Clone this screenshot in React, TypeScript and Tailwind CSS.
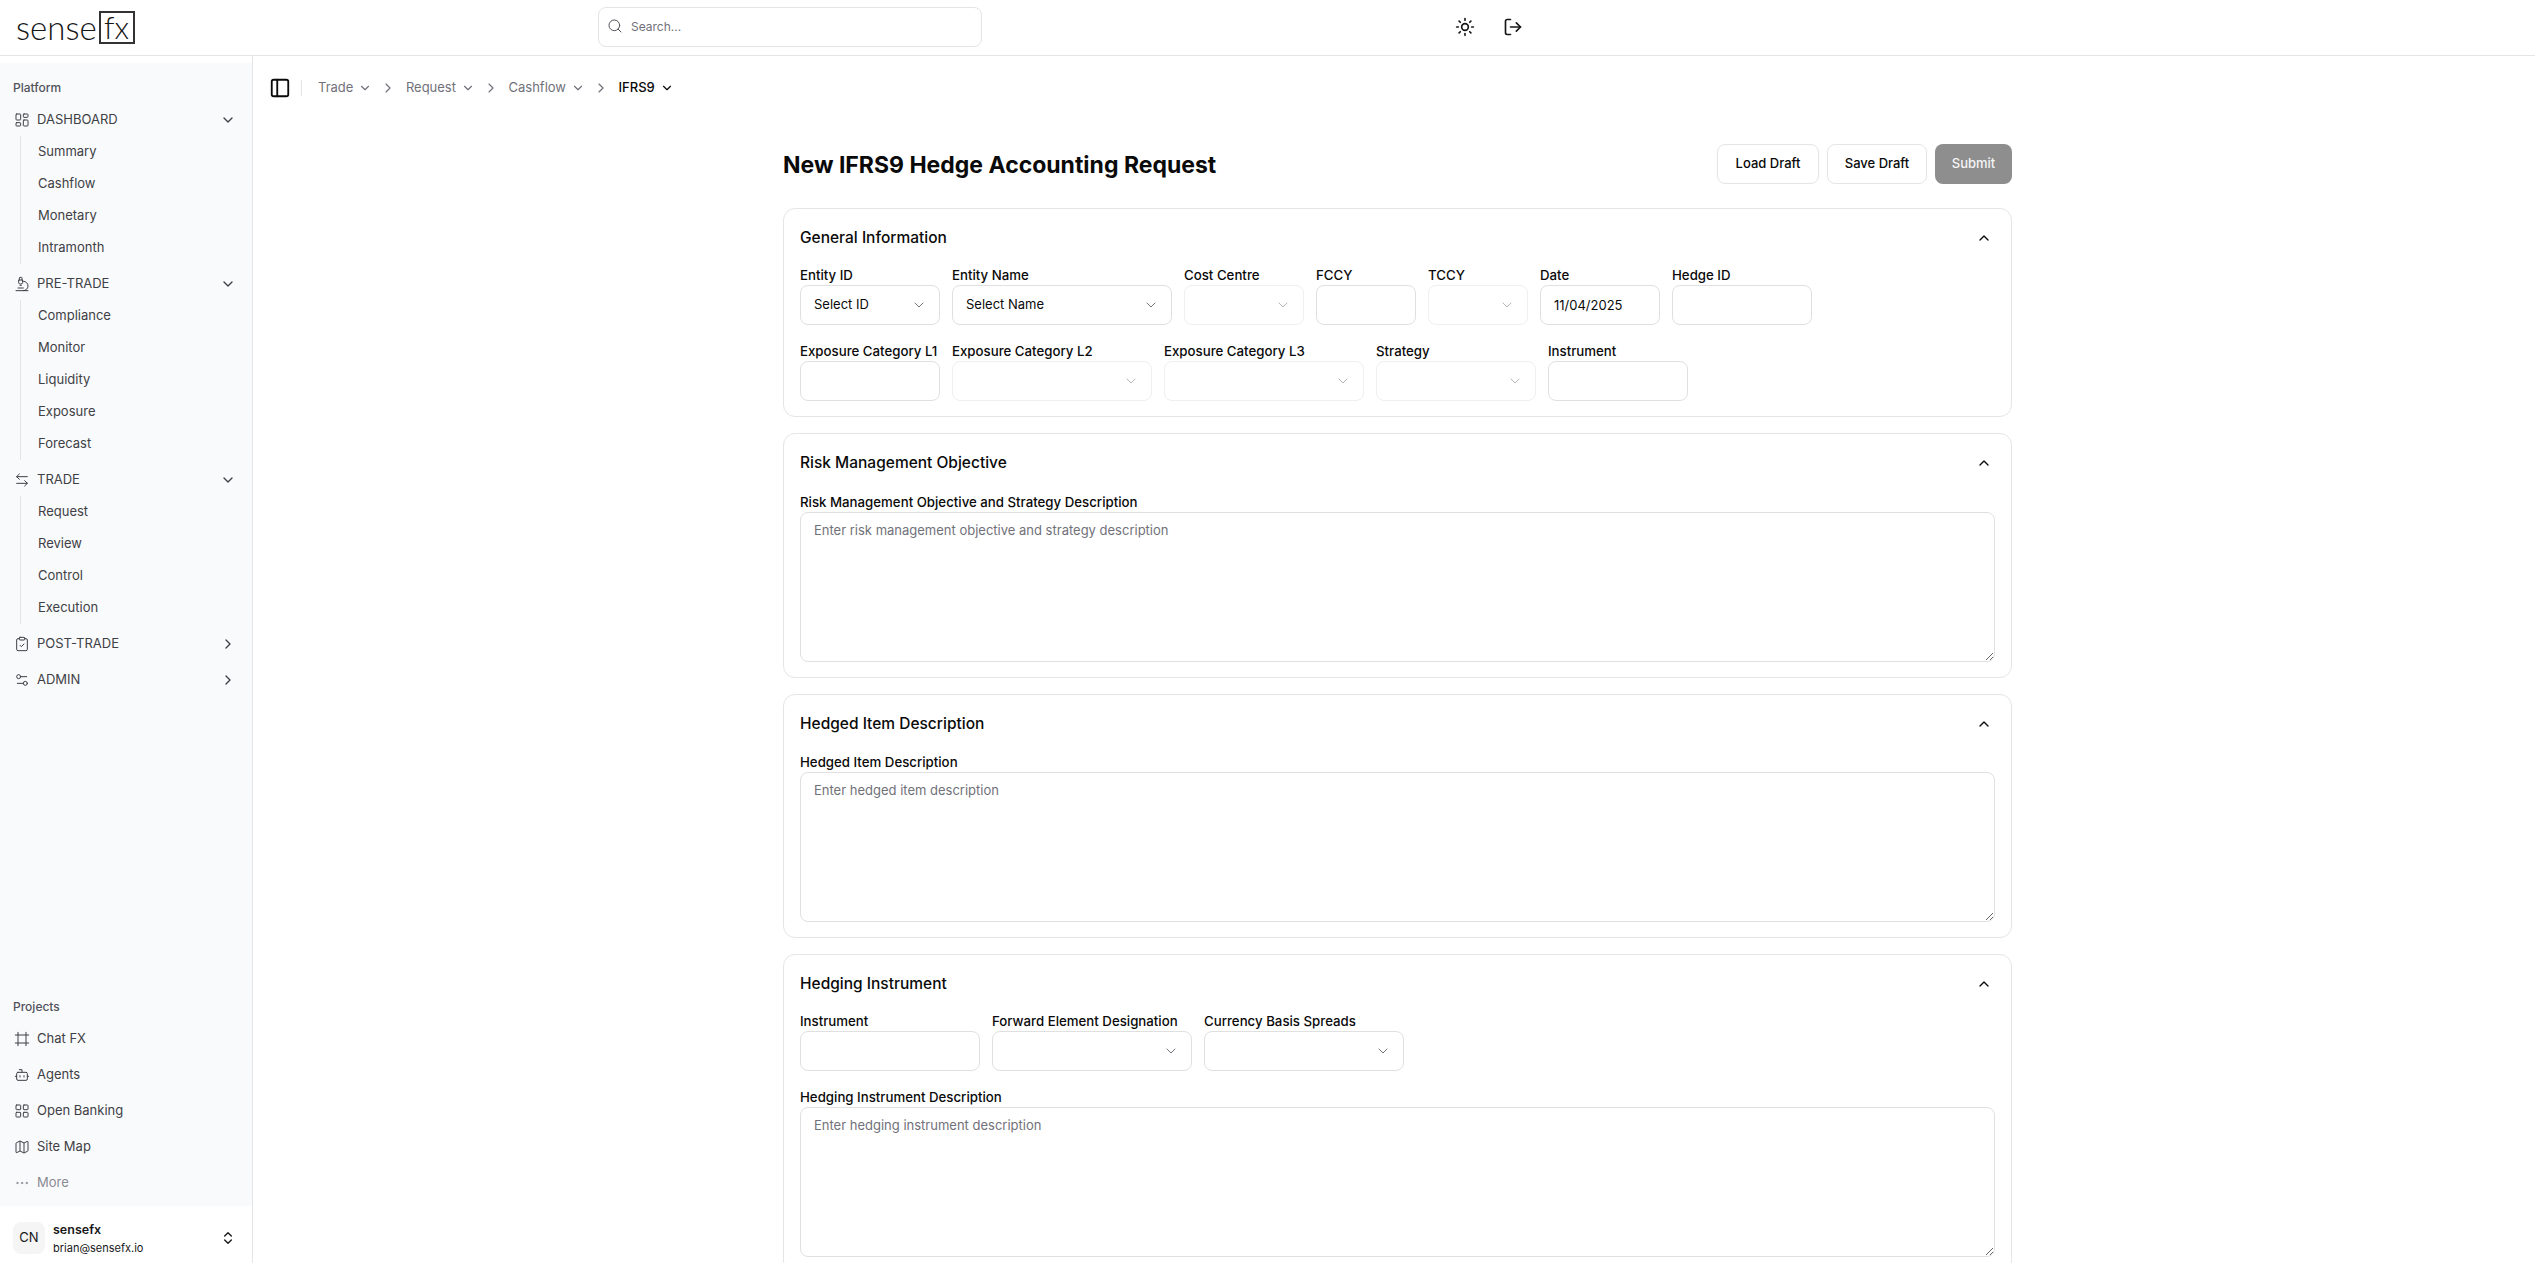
import React from "react";
import {
  LayoutDashboard, Microscope, ArrowLeftRight, ClipboardCheck, Settings2, Frame, Bot, LayoutGrid, Map as MapIcon,
  MoreHorizontal, ChevronsUpDown, Sun, LogOut, Search, PanelLeft, ChevronDown, ChevronRight, ChevronUp,
} from "lucide-react";

type NavGroup = { label: string; icon: React.ElementType; open: boolean; items: string[] };

const platform: NavGroup[] = [
  { label: "DASHBOARD", icon: LayoutDashboard, open: true, items: ["Summary", "Cashflow", "Monetary", "Intramonth"] },
  { label: "PRE-TRADE", icon: Microscope, open: true, items: ["Compliance", "Monitor", "Liquidity", "Exposure", "Forecast"] },
  { label: "TRADE", icon: ArrowLeftRight, open: true, items: ["Request", "Review", "Control", "Execution"] },
  { label: "POST-TRADE", icon: ClipboardCheck, open: false, items: [] },
  { label: "ADMIN", icon: Settings2, open: false, items: [] },
];

const projects: { label: string; icon: React.ElementType }[] = [
  { label: "Chat FX", icon: Frame },
  { label: "Agents", icon: Bot },
  { label: "Open Banking", icon: LayoutGrid },
  { label: "Site Map", icon: MapIcon },
];

function Sidebar() {
  return (
    <aside className="w-[253px] shrink-0 border-r border-[#e5e5e5] pt-[7px] flex flex-col">
      <div className="flex-1 min-h-0 bg-[#f9fafb] flex flex-col px-[8px] pt-[9px] pb-[7px]">
        <div className="h-8 flex items-center px-[5px] text-[12px] font-medium text-[#52525b]">Platform</div>
        <div className="flex flex-col gap-1">
          {platform.map((g) => (
            <div key={g.label}>
              <div className="h-8 flex items-center pl-[6px] pr-[8px] text-[#3f3f46]">
                <g.icon size={16} strokeWidth={1.5} className="shrink-0" />
                <span className="ml-[7px] text-[13px] flex-1">{g.label}</span>
                {g.open ? <ChevronDown size={16} strokeWidth={2} /> : <ChevronRight size={16} strokeWidth={2} />}
              </div>
              {g.open && (
                <div className="ml-[12px] border-l border-[#e5e5e5] pl-[17px]">
                  {g.items.map((i) => (
                    <div key={i} className="h-8 flex items-center text-[13px] text-[#3f3f46]">{i}</div>
                  ))}
                </div>
              )}
            </div>
          ))}
        </div>
        <div className="flex-1" />
        <div className="h-8 flex items-center px-[5px] text-[12px] font-medium text-[#52525b]">Projects</div>
        <div className="flex flex-col gap-1">
          {projects.map((p) => (
            <div key={p.label} className="h-8 flex items-center pl-[6px] text-[#3f3f46]">
              <p.icon size={16} strokeWidth={1.5} className="shrink-0" />
              <span className="ml-[7px] text-[13px]">{p.label}</span>
            </div>
          ))}
          <div className="h-8 flex items-center pl-[6px] text-[#8a8a93]">
            <MoreHorizontal size={16} strokeWidth={1.5} className="shrink-0" />
            <span className="ml-[7px] text-[13px]">More</span>
          </div>
        </div>
      </div>
      <div className="h-[57px] shrink-0 flex items-start pt-4 pl-[13px] pr-[16px]">
        <div className="w-8 h-8 rounded-lg bg-[#f5f5f5] flex items-center justify-center text-[13px] text-[#171717]">CN</div>
        <div className="ml-2 flex-1 flex flex-col leading-[18px] -mt-[1px]">
          <span className="text-[12.5px] font-semibold text-[#171717]">sensefx</span>
          <span className="text-[11px] text-[#171717]">brian@sensefx.io</span>
        </div>
        <ChevronsUpDown size={16} strokeWidth={2} className="mt-2 text-[#171717]" />
      </div>
    </aside>
  );
}

function Header() {
  return (
    <header className="h-[56px] shrink-0 border-b border-[#e5e5e5] flex items-center relative">
      <div className="w-[598px] shrink-0 pl-[16px] flex items-center">
        <span className="text-[33px] font-light text-[#171717] leading-none font-['Lato',sans-serif]">sense</span>
        <span className="ml-[2px] w-[36px] h-[33px] shrink-0 border-2 border-[#333] flex items-center justify-center text-[31px] font-light text-[#171717] leading-none font-['Lato',sans-serif]">fx</span>
      </div>
      <div className="w-[384px] h-[40px] border border-[#e5e5e5] rounded-lg flex items-center pl-[8px] shrink-0 -mt-[1px]">
        <Search size={16} strokeWidth={1.5} className="text-[#52525b] -mt-[2px]" />
        <span className="ml-[8px] text-[12px] text-[#71717a]">Search...</span>
      </div>
      <div className="ml-[473px] flex items-center gap-[28px] text-[#171717] -mt-[2px]">
        <Sun size={20} strokeWidth={2} />
        <LogOut size={20} strokeWidth={2} />
      </div>
    </header>
  );
}

function Crumb({ label, active }: { label: string; active?: boolean }) {
  return (
    <span className={`flex items-center gap-[5px] text-[13px] ${active ? "font-medium text-[#0a0a0a]" : "text-[#71717a]"}`}>
      {label}
      <ChevronDown size={14} strokeWidth={2} />
    </span>
  );
}

function Sep() {
  return <ChevronRight size={16} strokeWidth={1.75} className="ml-[8px] mr-[9.5px] text-[#71717a]" />;
}

function Breadcrumbs() {
  return (
    <div className="h-[50px] flex items-center pl-[16px] shrink-0">
      <PanelLeft size={22} strokeWidth={2} className="text-[#0a0a0a]" />
      <div className="ml-[10px] mr-[16px] w-px h-4 bg-[#e5e5e5]" />
      <Crumb label="Trade" />
      <Sep />
      <Crumb label="Request" />
      <Sep />
      <Crumb label="Cashflow" />
      <Sep />
      <Crumb label="IFRS9" active />
    </div>
  );
}

function Label({ children }: { children: React.ReactNode }) {
  return <label className="block h-[20px] leading-[20px] text-[13.25px] font-medium text-[#0a0a0a] whitespace-nowrap">{children}</label>;
}

function Field({ label, width, children }: { label: string; width: string; children: React.ReactNode }) {
  return (
    <div className={`${width} shrink-0`}>
      <Label>{label}</Label>
      {children}
    </div>
  );
}

function TextInput({ value }: { value?: string }) {
  return (
    <input
      readOnly
      value={value ?? ""}
      className="w-full h-10 border border-[#e0e0e0] rounded-lg px-[13px] text-[13px] text-[#0a0a0a] outline-none bg-white"
    />
  );
}

function Sel({ text, disabled }: { text?: string; disabled?: boolean }) {
  return (
    <div className={`w-full h-10 border rounded-lg flex items-center justify-between pl-[13px] pr-[12px] text-[13px] text-[#0a0a0a] ${disabled ? "border-[#efefef]" : "border-[#e0e0e0]"}`}>
      <span>{text}</span>
      <ChevronDown size={16} strokeWidth={1.5} className={disabled ? "text-[#b5b5b5]" : "text-[#71717a]"} />
    </div>
  );
}

function Area({ placeholder }: { placeholder: string }) {
  return (
    <textarea
      readOnly
      placeholder={placeholder}
      className="block w-full h-[150px] border border-[#e0e0e0] rounded-lg px-[13px] py-[8px] text-[13px] outline-none placeholder:text-[#71717a]"
    />
  );
}

function Card({ title, tall, children }: { title: string; tall?: boolean; children: React.ReactNode }) {
  return (
    <section className="border border-[#e5e5e5] rounded-xl px-[16px] py-[15px]">
      <div className="h-[28px] flex items-center justify-between pr-[2px]">
        <h2 className="text-[15.5px] font-medium text-[#0a0a0a]">{title}</h2>
        <ChevronUp size={16} strokeWidth={2} className="text-[#0a0a0a] mr-[1px]" />
      </div>
      <div className={tall ? "mt-[14.5px]" : "mt-[13px]"}>{children}</div>
    </section>
  );
}

function Form() {
  return (
    <div className="ml-[530px] w-[1229px] pt-[31px]">
      <div className="h-[40px] flex items-center justify-between">
        <h1 className="text-[23px] font-bold text-[#0a0a0a] leading-none pt-[2px]">New IFRS9 Hedge Accounting Request</h1>
        <div className="flex gap-[8px] text-[13px] font-medium">
          <button className="w-[102px] h-10 border border-[#e5e5e5] rounded-lg text-[#0a0a0a]">Load Draft</button>
          <button className="w-[100px] h-10 border border-[#e5e5e5] rounded-lg text-[#0a0a0a]">Save Draft</button>
          <button className="w-[77px] h-10 rounded-lg bg-[#8e8e8e] text-[#f5f5f5]">Submit</button>
        </div>
      </div>
      <div className="mt-[24px] flex flex-col gap-[16px]">
        <Card title="General Information">
          <div className="flex gap-[12px]">
            <Field label="Entity ID" width="w-[140px]"><Sel text="Select ID" /></Field>
            <Field label="Entity Name" width="w-[220px]"><Sel text="Select Name" /></Field>
            <Field label="Cost Centre" width="w-[120px]"><Sel disabled /></Field>
            <Field label="FCCY" width="w-[100px]"><TextInput /></Field>
            <Field label="TCCY" width="w-[100px]"><Sel disabled /></Field>
            <Field label="Date" width="w-[120px]"><TextInput value="11/04/2025" /></Field>
            <Field label="Hedge ID" width="w-[140px]"><TextInput /></Field>
          </div>
          <div className="flex gap-[12px] mt-[16px]">
            <Field label="Exposure Category L1" width="w-[140px]"><TextInput /></Field>
            <Field label="Exposure Category L2" width="w-[200px]"><Sel disabled /></Field>
            <Field label="Exposure Category L3" width="w-[200px]"><Sel disabled /></Field>
            <Field label="Strategy" width="w-[160px]"><Sel disabled /></Field>
            <Field label="Instrument" width="w-[140px]"><TextInput /></Field>
          </div>
        </Card>
        <Card title="Risk Management Objective" tall>
          <Label>Risk Management Objective and Strategy Description</Label>
          <Area placeholder="Enter risk management objective and strategy description" />
        </Card>
        <Card title="Hedged Item Description" tall>
          <Label>Hedged Item Description</Label>
          <Area placeholder="Enter hedged item description" />
        </Card>
        <Card title="Hedging Instrument">
          <div className="flex gap-[12px]">
            <Field label="Instrument" width="w-[180px]"><TextInput /></Field>
            <Field label="Forward Element Designation" width="w-[200px]"><Sel /></Field>
            <Field label="Currency Basis Spreads" width="w-[200px]"><Sel /></Field>
          </div>
          <div className="mt-[16px]">
            <Label>Hedging Instrument Description</Label>
            <Area placeholder="Enter hedging instrument description" />
          </div>
        </Card>
      </div>
    </div>
  );
}

export default function App() {
  return (
    <div className="h-screen overflow-hidden flex flex-col bg-white font-['Inter',sans-serif]">
      <Header />
      <div className="flex flex-1 min-h-0">
        <Sidebar />
        <main className="flex-1 min-w-0 overflow-hidden">
          <div className="pt-[7px]">
            <Breadcrumbs />
          </div>
          <Form />
        </main>
      </div>
    </div>
  );
}
